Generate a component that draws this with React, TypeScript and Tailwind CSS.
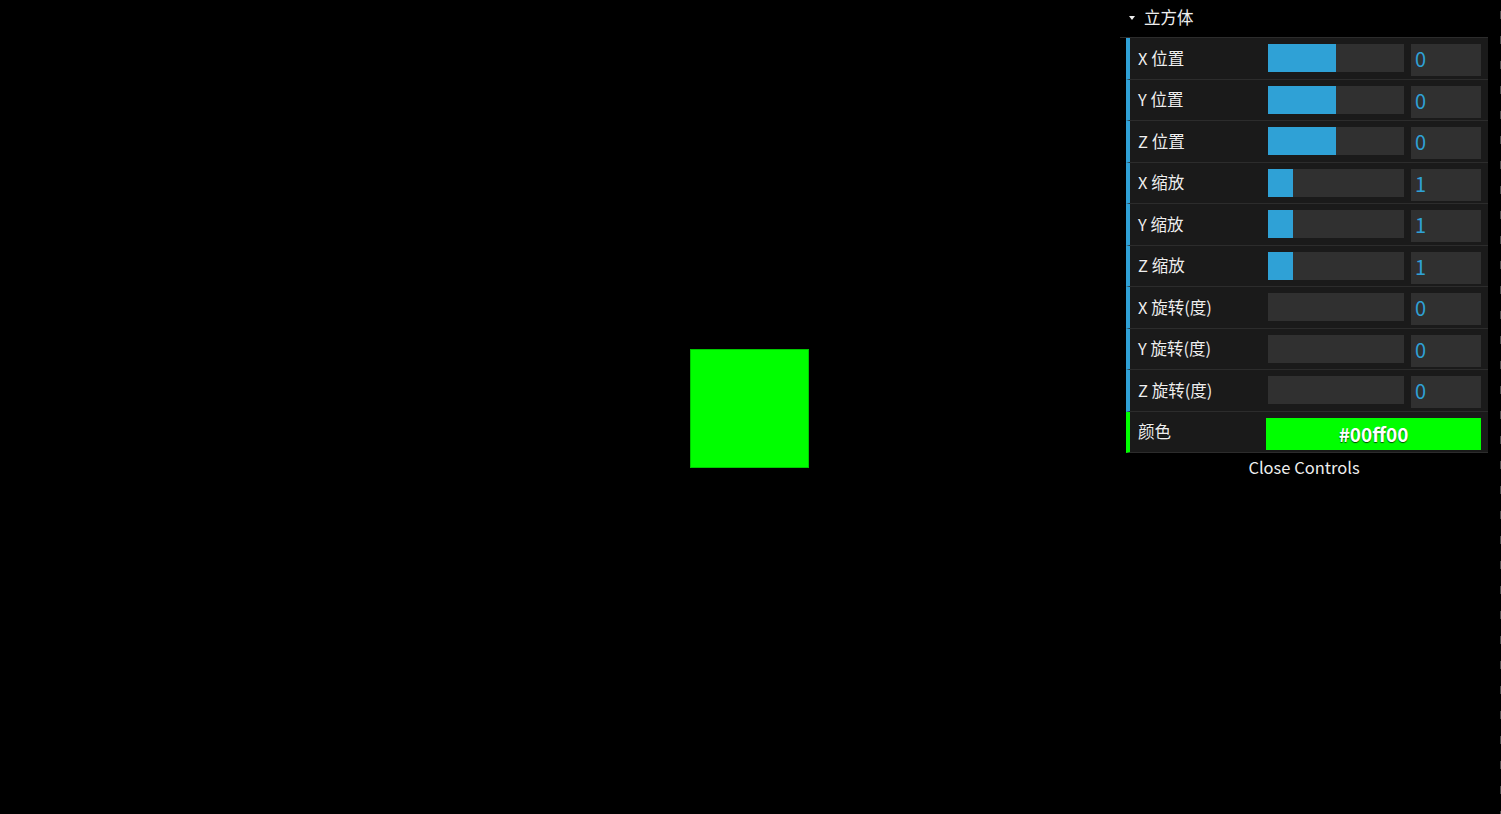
import React from 'react';

type Row = { label: string; value: string; fill: number };

const rows: Row[] = [
  { label: 'X 位置', value: '0', fill: 68 },
  { label: 'Y 位置', value: '0', fill: 68 },
  { label: 'Z 位置', value: '0', fill: 68 },
  { label: 'X 缩放', value: '1', fill: 25 },
  { label: 'Y 缩放', value: '1', fill: 25 },
  { label: 'Z 缩放', value: '1', fill: 25 },
  { label: 'X 旋转(度)', value: '0', fill: 0 },
  { label: 'Y 旋转(度)', value: '0', fill: 0 },
  { label: 'Z 旋转(度)', value: '0', fill: 0 },
];

const font = "font-['Noto_Sans_CJK_SC','Noto_Sans',sans-serif]";

const App = () => {
  return (
    <div className={`relative w-full h-[814px] bg-black overflow-hidden flex items-center justify-center ${font}`}>
      {/* scene */}
      <div className="w-[119px] h-[119px] bg-[#00ff00] border border-[#00c800] ml-[-2px] mt-[3px]" />

      {/* right edge dashed line */}
      <div className="absolute right-0 top-0 h-full w-px bg-[repeating-linear-gradient(to_bottom,transparent_0px,transparent_11px,#474747_11px,#474747_19px,transparent_19px,transparent_25px)]" />

      {/* controls panel */}
      <div className="absolute top-0 left-[1120px] w-[368px] text-[#eeeeee]">
        <div className="h-[38px] bg-black border-b border-[#2c2c2c] flex items-center pl-[9px] pb-[2px]">
          <span className="w-0 h-0 border-l-[3.5px] border-r-[3.5px] border-t-[4.5px] border-l-transparent border-r-transparent border-t-[#eeeeee] mr-[9px]" />
          <span className="text-[16.5px] leading-none [text-shadow:0_-1px_0_#111]">立方体</span>
        </div>

        <div className="ml-[6px]">
          {rows.map((r, i) => (
            <div
              key={i}
              className="h-[41.5px] bg-[#1a1a1a] border-b border-[#2c2c2c] border-l-4 border-l-[#2fa1d6] flex items-start"
            >
              <div className="w-[138px] h-[40px] pl-[8px] flex items-center text-[16.5px] leading-none [text-shadow:0_-1px_0_#111]">
                {r.label}
              </div>
              <div className="mt-[6px] w-[136px] h-[28px] bg-[#303030]">
                <div className="h-full bg-[#2fa1d6]" style={{ width: r.fill }} />
              </div>
              <div className="mt-[6px] ml-[7px] w-[70px] h-[32px] bg-[#303030] pl-[4px] pb-[2px] flex items-center text-[20px] leading-none text-[#2fa1d6]">
                {r.value}
              </div>
            </div>
          ))}

          <div className="h-[41.5px] bg-[#1a1a1a] border-b border-[#2c2c2c] border-l-4 border-l-[#00ff00] flex items-start">
            <div className="w-[136px] h-[40px] pl-[8px] flex items-center text-[16.5px] leading-none [text-shadow:0_-1px_0_#111]">
              颜色
            </div>
            <div className="mt-[6px] w-[215px] h-[32px] bg-[#00ff00] pb-[1px] flex items-center justify-center text-[19px] font-bold leading-none text-white [text-shadow:0_1px_1px_rgba(0,0,0,0.7)]">
              #00ff00
            </div>
          </div>
        </div>

        <div className="h-[30px] flex items-center justify-center text-[16.5px] leading-none pb-[1px]">
          Close Controls
        </div>
      </div>
    </div>
  );
};

export default App;
